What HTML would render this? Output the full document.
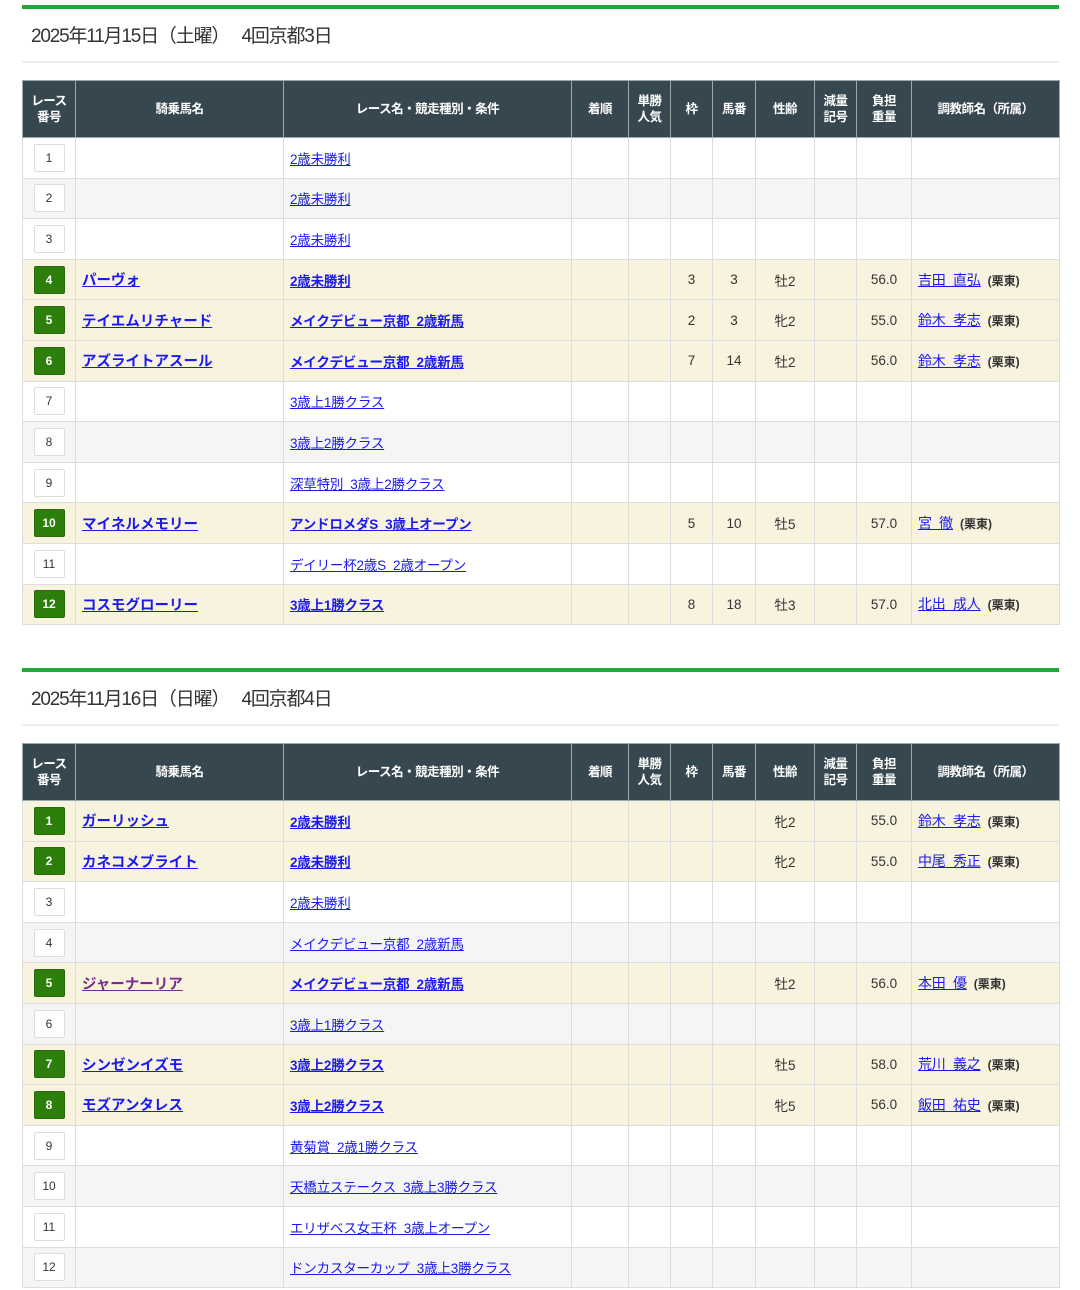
<!DOCTYPE html>
<html><head><meta charset="utf-8"><style>
*{margin:0;padding:0;box-sizing:border-box}
body{width:1080px;height:1290px;background:#fff;font-family:"Liberation Sans","Noto Sans CJK JP",sans-serif;color:#333;position:relative;overflow:hidden}
.sec{position:absolute;left:22px;width:1037px}
.bar{height:4px;background:#22a83a}
.title{height:54px;line-height:56px;font-size:19px;padding-left:9px;letter-spacing:-1.2px;color:#333;border-bottom:2px solid #eee}
table{border-collapse:collapse;width:1037px;table-layout:fixed;margin-top:17px}
th{background:#37474f;color:#fff;font-size:12.5px;font-weight:bold;height:57px;border:1px solid #9aa;line-height:16px;letter-spacing:-0.5px}
td{height:40.6px;border:1px solid #ddd;font-size:13.5px;text-align:center;letter-spacing:0}
tr.w td{background:#fff}tr.g td{background:#f5f5f5}tr.h td{background:#f8f3df}
td.l{text-align:left;padding-left:6px;white-space:nowrap}
a{color:#1a1aee;text-decoration:underline;font-size:13.5px;letter-spacing:-0.2px}
tr.h a{font-weight:bold}
td.hn a{font-size:14.5px;letter-spacing:0}
a.v{color:#7b2a8e}
.n{display:inline-block;width:31px;height:28px;line-height:26px;border:1px solid #ddd;border-radius:2px;background:#fff;font-size:12px;color:#333}
tr.h .n{background:#2b7f0a;border-color:#2a6a0a;color:#fff;font-weight:bold}
.s{font-size:12px;font-weight:bold;color:#333;margin-left:7px}
.t{font-weight:normal!important;font-size:14px!important}
</style></head><body>

<div class="sec" style="top:5px">
<div class="bar"></div>
<div class="title">2025年11月15日（土曜）　 4回京都3日</div>
<table>
<colgroup><col style="width:53px"><col style="width:208px"><col style="width:288px"><col style="width:57px"><col style="width:42px"><col style="width:42px"><col style="width:43px"><col style="width:59px"><col style="width:42px"><col style="width:55px"><col style="width:148px"></colgroup>
<tr><th>レース<br>番号</th><th>騎乗馬名</th><th>レース名・競走種別・条件</th><th>着順</th><th>単勝<br>人気</th><th>枠</th><th>馬番</th><th>性齢</th><th>減量<br>記号</th><th>負担<br>重量</th><th>調教師名（所属）</th></tr>
<tr class="w"><td><span class="n">1</span></td><td></td><td class="l"><a>2歳未勝利</a></td><td></td><td></td><td></td><td></td><td></td><td></td><td></td><td></td></tr>
<tr class="g"><td><span class="n">2</span></td><td></td><td class="l"><a>2歳未勝利</a></td><td></td><td></td><td></td><td></td><td></td><td></td><td></td><td></td></tr>
<tr class="w"><td><span class="n">3</span></td><td></td><td class="l"><a>2歳未勝利</a></td><td></td><td></td><td></td><td></td><td></td><td></td><td></td><td></td></tr>
<tr class="h"><td><span class="n">4</span></td><td class="l hn"><a>パーヴォ</a></td><td class="l"><a>2歳未勝利</a></td><td></td><td></td><td>3</td><td>3</td><td>牡2</td><td></td><td>56.0</td><td class="l"><a class="t">吉田&nbsp; 直弘</a><span class="s">(栗東)</span></td></tr>
<tr class="h"><td><span class="n">5</span></td><td class="l hn"><a>テイエムリチャード</a></td><td class="l"><a>メイクデビュー京都&nbsp; 2歳新馬</a></td><td></td><td></td><td>2</td><td>3</td><td>牝2</td><td></td><td>55.0</td><td class="l"><a class="t">鈴木&nbsp; 孝志</a><span class="s">(栗東)</span></td></tr>
<tr class="h"><td><span class="n">6</span></td><td class="l hn"><a>アズライトアスール</a></td><td class="l"><a>メイクデビュー京都&nbsp; 2歳新馬</a></td><td></td><td></td><td>7</td><td>14</td><td>牡2</td><td></td><td>56.0</td><td class="l"><a class="t">鈴木&nbsp; 孝志</a><span class="s">(栗東)</span></td></tr>
<tr class="w"><td><span class="n">7</span></td><td></td><td class="l"><a>3歳上1勝クラス</a></td><td></td><td></td><td></td><td></td><td></td><td></td><td></td><td></td></tr>
<tr class="g"><td><span class="n">8</span></td><td></td><td class="l"><a>3歳上2勝クラス</a></td><td></td><td></td><td></td><td></td><td></td><td></td><td></td><td></td></tr>
<tr class="w"><td><span class="n">9</span></td><td></td><td class="l"><a>深草特別&nbsp; 3歳上2勝クラス</a></td><td></td><td></td><td></td><td></td><td></td><td></td><td></td><td></td></tr>
<tr class="h"><td><span class="n">10</span></td><td class="l hn"><a>マイネルメモリー</a></td><td class="l"><a>アンドロメダS&nbsp; 3歳上オープン</a></td><td></td><td></td><td>5</td><td>10</td><td>牡5</td><td></td><td>57.0</td><td class="l"><a class="t">宮&nbsp; 徹</a><span class="s">(栗東)</span></td></tr>
<tr class="w"><td><span class="n">11</span></td><td></td><td class="l"><a>デイリー杯2歳S&nbsp; 2歳オープン</a></td><td></td><td></td><td></td><td></td><td></td><td></td><td></td><td></td></tr>
<tr class="h"><td><span class="n">12</span></td><td class="l hn"><a>コスモグローリー</a></td><td class="l"><a>3歳上1勝クラス</a></td><td></td><td></td><td>8</td><td>18</td><td>牡3</td><td></td><td>57.0</td><td class="l"><a class="t">北出&nbsp; 成人</a><span class="s">(栗東)</span></td></tr>
</table>
</div>

<div class="sec" style="top:668px">
<div class="bar"></div>
<div class="title">2025年11月16日（日曜）　 4回京都4日</div>
<table>
<colgroup><col style="width:53px"><col style="width:208px"><col style="width:288px"><col style="width:57px"><col style="width:42px"><col style="width:42px"><col style="width:43px"><col style="width:59px"><col style="width:42px"><col style="width:55px"><col style="width:148px"></colgroup>
<tr><th>レース<br>番号</th><th>騎乗馬名</th><th>レース名・競走種別・条件</th><th>着順</th><th>単勝<br>人気</th><th>枠</th><th>馬番</th><th>性齢</th><th>減量<br>記号</th><th>負担<br>重量</th><th>調教師名（所属）</th></tr>
<tr class="h"><td><span class="n">1</span></td><td class="l hn"><a>ガーリッシュ</a></td><td class="l"><a>2歳未勝利</a></td><td></td><td></td><td></td><td></td><td>牝2</td><td></td><td>55.0</td><td class="l"><a class="t">鈴木&nbsp; 孝志</a><span class="s">(栗東)</span></td></tr>
<tr class="h"><td><span class="n">2</span></td><td class="l hn"><a>カネコメブライト</a></td><td class="l"><a>2歳未勝利</a></td><td></td><td></td><td></td><td></td><td>牝2</td><td></td><td>55.0</td><td class="l"><a class="t">中尾&nbsp; 秀正</a><span class="s">(栗東)</span></td></tr>
<tr class="w"><td><span class="n">3</span></td><td></td><td class="l"><a>2歳未勝利</a></td><td></td><td></td><td></td><td></td><td></td><td></td><td></td><td></td></tr>
<tr class="g"><td><span class="n">4</span></td><td></td><td class="l"><a>メイクデビュー京都&nbsp; 2歳新馬</a></td><td></td><td></td><td></td><td></td><td></td><td></td><td></td><td></td></tr>
<tr class="h"><td><span class="n">5</span></td><td class="l hn"><a class="v">ジャーナーリア</a></td><td class="l"><a>メイクデビュー京都&nbsp; 2歳新馬</a></td><td></td><td></td><td></td><td></td><td>牡2</td><td></td><td>56.0</td><td class="l"><a class="t">本田&nbsp; 優</a><span class="s">(栗東)</span></td></tr>
<tr class="g"><td><span class="n">6</span></td><td></td><td class="l"><a>3歳上1勝クラス</a></td><td></td><td></td><td></td><td></td><td></td><td></td><td></td><td></td></tr>
<tr class="h"><td><span class="n">7</span></td><td class="l hn"><a>シンゼンイズモ</a></td><td class="l"><a>3歳上2勝クラス</a></td><td></td><td></td><td></td><td></td><td>牡5</td><td></td><td>58.0</td><td class="l"><a class="t">荒川&nbsp; 義之</a><span class="s">(栗東)</span></td></tr>
<tr class="h"><td><span class="n">8</span></td><td class="l hn"><a>モズアンタレス</a></td><td class="l"><a>3歳上2勝クラス</a></td><td></td><td></td><td></td><td></td><td>牝5</td><td></td><td>56.0</td><td class="l"><a class="t">飯田&nbsp; 祐史</a><span class="s">(栗東)</span></td></tr>
<tr class="w"><td><span class="n">9</span></td><td></td><td class="l"><a>黄菊賞&nbsp; 2歳1勝クラス</a></td><td></td><td></td><td></td><td></td><td></td><td></td><td></td><td></td></tr>
<tr class="g"><td><span class="n">10</span></td><td></td><td class="l"><a>天橋立ステークス&nbsp; 3歳上3勝クラス</a></td><td></td><td></td><td></td><td></td><td></td><td></td><td></td><td></td></tr>
<tr class="w"><td><span class="n">11</span></td><td></td><td class="l"><a>エリザベス女王杯&nbsp; 3歳上オープン</a></td><td></td><td></td><td></td><td></td><td></td><td></td><td></td><td></td></tr>
<tr class="g"><td><span class="n">12</span></td><td></td><td class="l"><a>ドンカスターカップ&nbsp; 3歳上3勝クラス</a></td><td></td><td></td><td></td><td></td><td></td><td></td><td></td><td></td></tr>
</table>
</div>
</body></html>
